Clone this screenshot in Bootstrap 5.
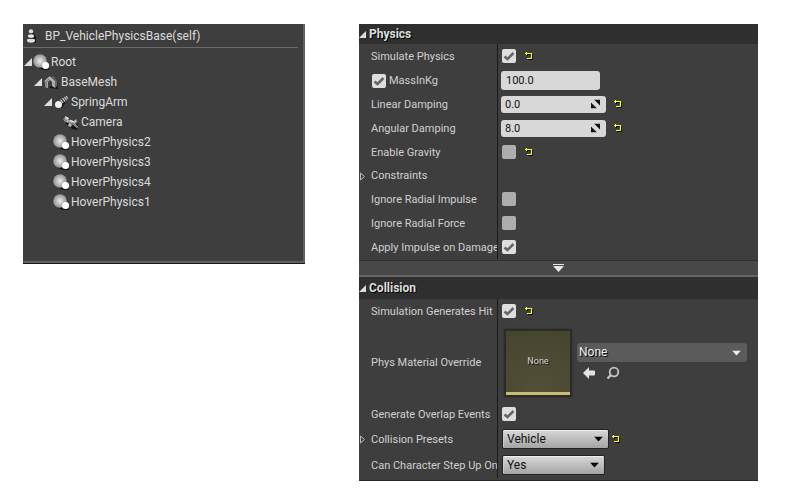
<!DOCTYPE html>
<html lang="en">
<head>
<meta charset="utf-8">
<meta name="viewport" content="width=device-width, initial-scale=1">
<title>BP_VehiclePhysicsBase</title>
<link href="https://cdn.jsdelivr.net/npm/bootstrap@5.3.0/dist/css/bootstrap.min.css" rel="stylesheet">
<style>
body{background:#fff;font-family:Roboto,"Liberation Sans",sans-serif;font-size:11px;line-height:16px;color:#d0d0d0}
.page{display:grid;grid-template-columns:282fr 399fr;column-gap:54px;padding:24px 32px 20px 23px;align-items:start}
.tree-panel{background:#3e3e3e;border-right:2px solid #606060;border-bottom:2px solid #606060;box-shadow:0 1px #1d1420;min-height:239px;font-size:12px;color:#dcdcdc}
.tree-title{height:24px;margin:0 5px 0 0;border-bottom:1px solid #686c68;padding-left:1px;gap:8px}
.tree-list{padding-top:4px}
.tree-list li{height:20px}
.lv1{padding-left:10px}.lv2{padding-left:20px}.lv3{padding-left:30px}
.twist{display:flex;align-items:center;width:10px;height:16px;padding:0;border:0;background:none;flex:none}
.tree-list .twist{justify-content:center}
.tree-list svg.ico{width:17px;height:17px;flex:none;margin-right:1px}
.details{background:#3e3e3e;border-bottom:1px solid #282828}
.sect{height:20px;background:#2f2f2f;font-size:12px;font-weight:700;color:#dedede;text-shadow:1px 1px #000;margin:0;line-height:20px}
.sect.tall{height:22px}
.prop{display:grid;grid-template-columns:139px 1fr;height:24px}
.prop.slim{height:23px}.prop.mid{height:26px}.prop.big{height:79px}
.name{border-right:1px solid #191919;overflow:hidden;white-space:nowrap;padding-top:1px}
.name label,.name span{flex:none}
.pad{padding-left:12px}
.name .twist{margin-right:2px}
.val{padding-left:4px;min-width:0}
.edge{padding-left:2px}
.tick{appearance:none;width:14px;height:14px;margin:0;border-radius:2px;background:#adadad;flex:none}
.name .tick{margin:0 3px 0 1px}
.tick:checked{background:#dedede url("data:image/svg+xml,%3Csvg xmlns='http://www.w3.org/2000/svg' viewBox='0 0 14 14'%3E%3Cpath d='M2.5 7.5 5.5 10 11.5 4' fill='none' stroke='%23666' stroke-width='2.6'/%3E%3C/svg%3E")}
.revert{display:flex;width:10px;padding:0;border:0;background:none;flex:none}
.after-tick{margin-left:8px}
.after-num{margin-left:7px}
.after-sel{margin-left:2px}
.num{width:105px;height:17px;border:0;border-radius:3px;background:#d8d8d8;color:#111;padding:0 4px;display:block}
.num.mass{width:99px;height:19px;padding:0 5px}
.edge{padding-left:3px}
.over{position:absolute;pointer-events:none;right:6px;top:50%;transform:translateY(-50%)}
.drop{appearance:none;width:107px;height:20px;border:1px solid #222;border-radius:2px;background:linear-gradient(#d8d8d8,#a4a4a4);box-shadow:inset 0 1px #eee,inset 1px 0 #ccc;color:#111;padding:0 4px;font-size:12px;line-height:16px;display:block}
.drop.short{width:103px}
.asset{appearance:none;width:100%;height:19px;border:0;border-radius:3px;background:#5b5b5b;color:#f1f1f1;text-shadow:1px 1px #000;padding:0 2px 2px;line-height:16px;font-size:12px;display:block}
.thumb{width:68px;height:68px;margin-left:2px;border:2px solid #2b2b29;background:radial-gradient(circle at 50% 90%,#525038,#45442f);box-shadow:0 0 2px #2b2b2b;font-size:9px;color:#d4d4d4;text-shadow:1px 1px #111;flex:none}
.thumb div{border-bottom:3px solid #c9bd74;height:100%}
.pick{margin-left:5px;margin-right:11px;flex:1;min-width:0}
.tool{display:flex;width:14px;height:14px;padding:0;border:0;background:none}
.tools{padding:4px 0 2px 5px;gap:10px}
.more{width:100%;height:16px;padding:0;border:0;border-bottom:2px solid #646464;background:#484848}
.grp{padding-bottom:1px;border-bottom:1px solid #303030}
.last{padding-bottom:2px}
</style>
<script src="https://cdn.jsdelivr.net/npm/bootstrap@5.3.0/dist/js/bootstrap.bundle.min.js"></script>
</head>
<body>
<svg width="0" height="0" class="position-absolute" aria-hidden="true">
<defs>
<radialGradient id="ball" cx=".5" cy=".5" r=".55"><stop offset="0" stop-color="#ededed"/><stop offset=".55" stop-color="#b4b4b4"/><stop offset="1" stop-color="#8c8c8c"/></radialGradient>
<symbol id="sphere" viewBox="0 0 17 17"><path d="M5 14 10 16 16 16 15 9Z" fill="#161616"/><circle cx="7" cy="7" r="6.800" fill="url(#ball)"/><circle cx="12.600" cy="11.600" r="3.500" fill="#fff"/></symbol>
<symbol id="open" viewBox="0 0 8 8"><path d="M8 0V8H0Z" fill="#ddd"/></symbol>
<symbol id="shut" viewBox="0 0 6 9"><path d="M1.500 1V8L5.500 4.500Z" fill="none" stroke="#bbb"/></symbol>
<symbol id="undo" viewBox="0 0 10 10"><path d="M2 3.500H8.500V8.500H4M3.500 2V5" fill="none" stroke="#000"/><path d="M1 2.500H7.500V7.500H3M2.500 1V4" fill="none" stroke="#fafa30" stroke-width="1.200"/></symbol>
<symbol id="expand" viewBox="0 0 9 9"><path d="M3 0H9V6ZM0 3V9H6Z" fill="#111"/></symbol>
<symbol id="down" viewBox="0 0 9 5"><path d="M0 0H9L4.500 5Z"/></symbol>
</defs>
</svg>
<main class="page">
<section class="tree-panel" aria-label="Components">
<div class="tree-title d-flex align-items-center">
<svg width="13" height="16" viewBox="0 0 13 16"><path d="M3 14 12 15V9L9 4Z" fill="#181818"/><circle cx="7" cy="3.500" r="2.200" fill="#ddd"/><ellipse cx="7" cy="8" rx="3" ry="2" fill="#e8e8e8"/><ellipse cx="7" cy="12.500" rx="4" ry="2.200" fill="#ddd"/><path d="M5 5.800H9M4 10.300H10" stroke="#222"/></svg>
<span>BP_VehiclePhysicsBase(self)</span>
</div>
<ul class="tree-list list-unstyled mb-0">
<li class="d-flex align-items-center"><button class="twist" aria-label="Collapse Root"><svg width="8" height="8"><use href="#open"/></svg></button><svg class="ico"><use href="#sphere"/></svg><span>Root</span></li>
<li class="d-flex align-items-center lv1"><button class="twist" aria-label="Collapse BaseMesh"><svg width="8" height="8"><use href="#open"/></svg></button><svg class="ico" viewBox="0 0 17 17"><path d="M6 14 15 15 14 7Z" fill="#161616"/><path d="M2 7 6 3 8 3 12 7 12 14 9 12V8L7 6 5 8V14L2 13Z" fill="#aaa"/><path d="M2 7 6 3V6L4 8V14L2 13Z" fill="#858585"/><path d="M7 3 10 2 14 7 12 8ZM12 8 14 7V12L12 14Z" fill="#666"/><path d="M1.500 7.500 6.500 3 12 8" fill="none" stroke="#c8c8c8"/></svg><span>BaseMesh</span></li>
<li class="d-flex align-items-center lv2"><button class="twist" aria-label="Collapse SpringArm"><svg width="8" height="8"><use href="#open"/></svg></button><svg class="ico" viewBox="0 0 17 17"><path d="M5 14 9 14 13 8 9 8Z" fill="#1c1c1c"/><path d="M7.500 5.500 10 9M9.500 4 12 7.500M11.500 3 13.500 6M13.200 2 14.700 4.500" stroke="#ddd" stroke-width="1.100"/><circle cx="5.500" cy="10.500" r="3.500" fill="#f1f1f1"/></svg><span>SpringArm</span></li>
<li class="d-flex align-items-center lv3"><span class="twist"></span><svg class="ico" viewBox="0 0 17 17"><path d="M2 9 9 15 14 16 15 10Z" fill="#161616"/><path d="M2 2 6 4 5 6 11 7 13 5 14 8 12 9 15 13 14 14 9 10 8 13 5 12 6 9 1 7Z" fill="#bbb"/><path d="M0 5 4 7M5 8 10 10M8 12 10 9 14 13" fill="none" stroke="#777" stroke-width="1.300"/><path d="M3 3 6 5M7 6 11 8" stroke="#eee"/></svg><span>Camera</span></li>
<li class="d-flex align-items-center lv2"><span class="twist"></span><svg class="ico"><use href="#sphere"/></svg><span>HoverPhysics2</span></li>
<li class="d-flex align-items-center lv2"><span class="twist"></span><svg class="ico"><use href="#sphere"/></svg><span>HoverPhysics3</span></li>
<li class="d-flex align-items-center lv2"><span class="twist"></span><svg class="ico"><use href="#sphere"/></svg><span>HoverPhysics4</span></li>
<li class="d-flex align-items-center lv2"><span class="twist"></span><svg class="ico"><use href="#sphere"/></svg><span>HoverPhysics1</span></li>
</ul>
</section>

<section class="details" aria-label="Details">
<h2 class="sect d-flex align-items-center"><button class="twist" aria-label="Collapse Physics"><svg width="7" height="7"><use href="#open"/></svg></button>Physics</h2>
<div class="grp">
<div class="prop"><div class="name pad d-flex align-items-center"><label for="sim">Simulate Physics</label></div><div class="val d-flex align-items-center"><input type="checkbox" class="tick" id="sim" checked><button class="revert after-tick" aria-label="Reset Simulate Physics"><svg width="10" height="10"><use href="#undo"/></svg></button></div></div>
<div class="prop"><div class="name pad d-flex align-items-center"><input type="checkbox" class="tick" id="massOn" checked aria-label="Override mass"><label for="mass">MassInKg</label></div><div class="val edge d-flex align-items-center"><input type="text" class="num mass" id="mass" value="100.0"></div></div>
<div class="prop"><div class="name pad d-flex align-items-center"><label for="lin">Linear Damping</label></div><div class="val edge d-flex align-items-center"><div class="position-relative"><input type="text" class="num" id="lin" value="0.0"><svg class="over" width="9" height="9"><use href="#expand"/></svg></div><button class="revert after-num" aria-label="Reset Linear Damping"><svg width="10" height="10"><use href="#undo"/></svg></button></div></div>
<div class="prop"><div class="name pad d-flex align-items-center"><label for="ang">Angular Damping</label></div><div class="val edge d-flex align-items-center"><div class="position-relative"><input type="text" class="num" id="ang" value="8.0"><svg class="over" width="9" height="9"><use href="#expand"/></svg></div><button class="revert after-num" aria-label="Reset Angular Damping"><svg width="10" height="10"><use href="#undo"/></svg></button></div></div>
<div class="prop"><div class="name pad d-flex align-items-center"><label for="grav">Enable Gravity</label></div><div class="val d-flex align-items-center"><input type="checkbox" class="tick" id="grav"><button class="revert after-tick" aria-label="Reset Enable Gravity"><svg width="10" height="10"><use href="#undo"/></svg></button></div></div>
<div class="prop slim"><div class="name d-flex align-items-center"><button class="twist" aria-label="Expand Constraints"><svg width="6" height="9"><use href="#shut"/></svg></button><span>Constraints</span></div><div class="val"></div></div>
<div class="prop"><div class="name pad d-flex align-items-center"><label for="iri">Ignore Radial Impulse</label></div><div class="val d-flex align-items-center"><input type="checkbox" class="tick" id="iri"></div></div>
<div class="prop"><div class="name pad d-flex align-items-center"><label for="irf">Ignore Radial Force</label></div><div class="val d-flex align-items-center"><input type="checkbox" class="tick" id="irf"></div></div>
<div class="prop"><div class="name pad d-flex align-items-center"><label for="aid">Apply Impulse on Damage</label></div><div class="val d-flex align-items-center"><input type="checkbox" class="tick" id="aid" checked></div></div>
</div>
<button class="more d-flex justify-content-center align-items-center" aria-label="Show advanced"><svg width="11" height="8" viewBox="0 0 11 8"><path d="M0 0H11V1H0ZM0 2H11L5.500 8Z" fill="#e6e6e6"/></svg></button>
<h2 class="sect tall d-flex align-items-center"><button class="twist" aria-label="Collapse Collision"><svg width="7" height="7"><use href="#open"/></svg></button>Collision</h2>
<div class="last">
<div class="prop"><div class="name pad d-flex align-items-center"><label for="hit">Simulation Generates Hit</label></div><div class="val d-flex align-items-center"><input type="checkbox" class="tick" id="hit" checked><button class="revert after-tick" aria-label="Reset Simulation Generates Hit"><svg width="10" height="10"><use href="#undo"/></svg></button></div></div>
<div class="prop big"><div class="name pad d-flex align-items-center"><label for="mat">Phys Material Override</label></div><div class="val d-flex align-items-center"><div class="thumb"><div class="d-flex align-items-center justify-content-center">None</div></div>
<div class="pick"><div class="position-relative"><select class="asset" id="mat"><option>None</option></select><svg class="over" width="9" height="5" fill="#eee"><use href="#down"/></svg></div>
<div class="tools d-flex"><button class="tool" aria-label="Use selected asset"><svg width="14" height="14" viewBox="0 0 14 14"><path d="M1 7 7 1V4.500H12Q13 4.500 13 5.500V8.500Q13 9.500 12 9.500H7V13Z" fill="#e2e2e2"/></svg></button><button class="tool" aria-label="Browse to asset"><svg width="14" height="14" viewBox="0 0 14 14"><circle cx="8" cy="6" r="4.300" fill="none" stroke="#c4c4c4" stroke-width="1.800"/><path d="M5 9 1.500 12.500" stroke="#c4c4c4" stroke-width="2.400"/></svg></button></div></div></div></div>
<div class="prop"><div class="name pad d-flex align-items-center"><label for="ovl">Generate Overlap Events</label></div><div class="val d-flex align-items-center"><input type="checkbox" class="tick" id="ovl" checked></div></div>
<div class="prop mid"><div class="name d-flex align-items-center"><button class="twist" aria-label="Expand Collision Presets"><svg width="6" height="9"><use href="#shut"/></svg></button><label for="pre">Collision Presets</label></div><div class="val d-flex align-items-center"><div class="position-relative"><select class="drop" id="pre"><option>Vehicle</option></select><svg class="over" width="9" height="5"><use href="#down"/></svg></div><button class="revert after-sel" aria-label="Reset Collision Presets"><svg width="10" height="10"><use href="#undo"/></svg></button></div></div>
<div class="prop mid"><div class="name pad d-flex align-items-center"><label for="step">Can Character Step Up On</label></div><div class="val d-flex align-items-center"><div class="position-relative"><select class="drop short" id="step"><option>Yes</option></select><svg class="over" width="9" height="5"><use href="#down"/></svg></div></div></div>
</div>
</section>
</main>
</body>
</html>
